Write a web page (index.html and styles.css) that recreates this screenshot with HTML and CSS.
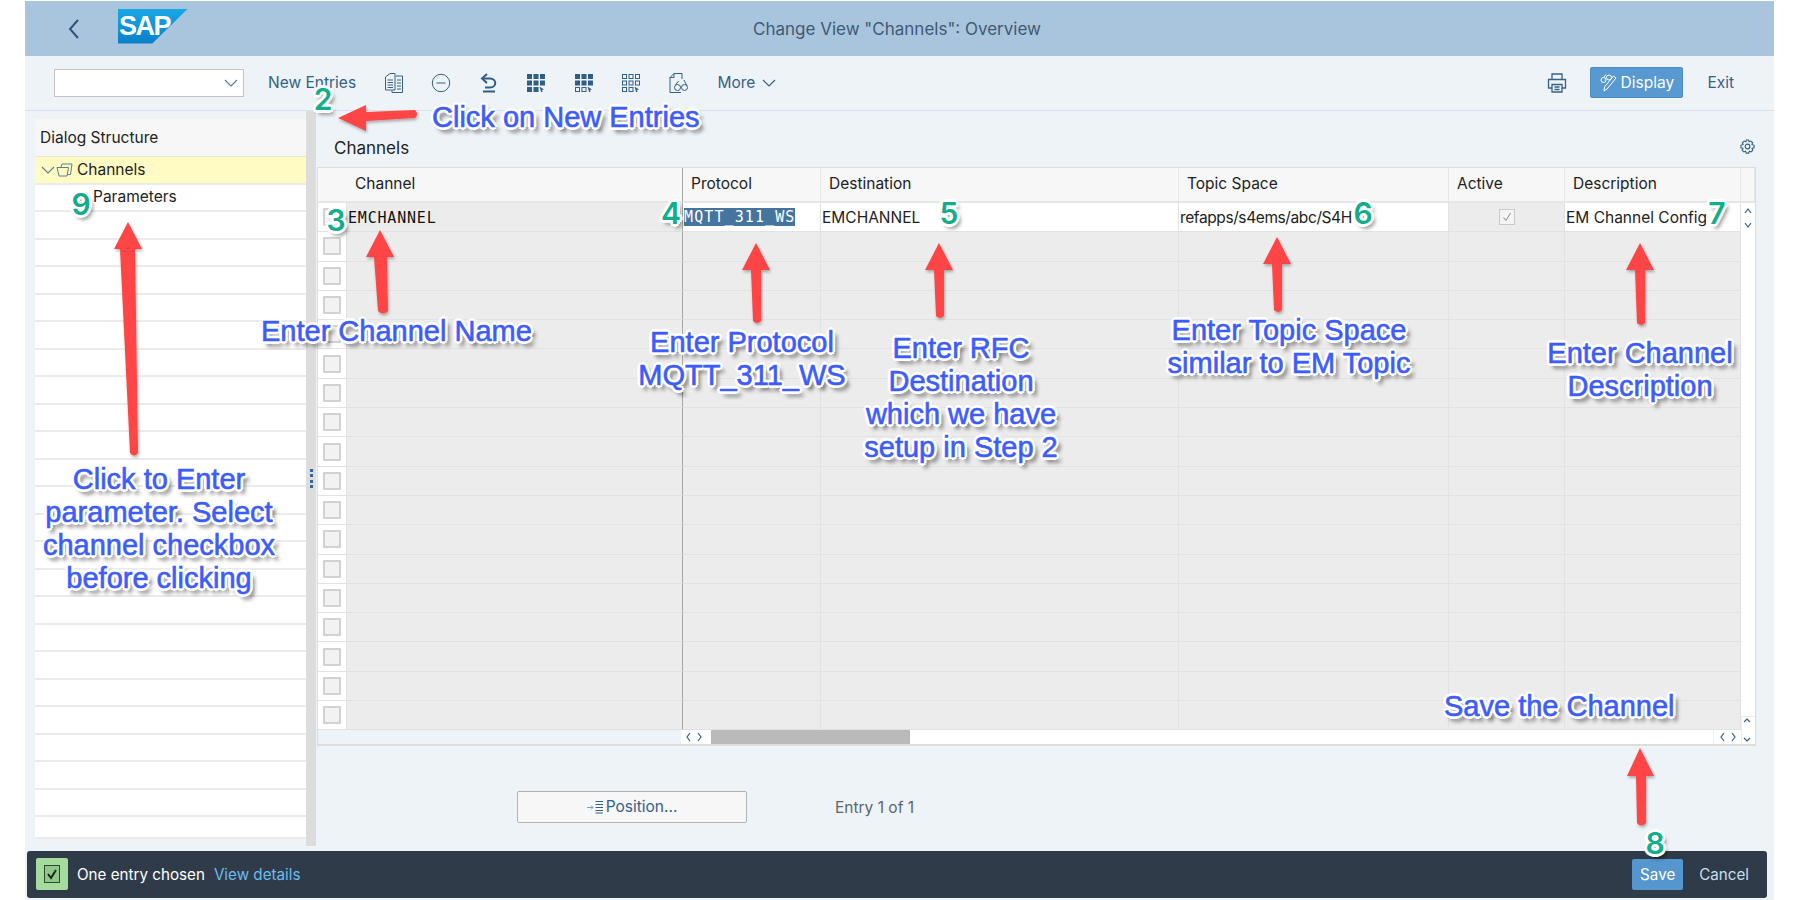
FILE: index.html
```html
<!DOCTYPE html>
<html>
<head>
	<title>Change View "Channels": Overview</title>
	<meta http-equiv="content-type" content="text/html; charset=UTF-8">
	<link rel="stylesheet" href="styles.css">
</head>
<body>
	<svg class="defs" width="0" height="0">
		<defs>
			<symbol id="squares" viewBox="0 0 18 18">
				<rect x="0" y="0" width="5" height="5"/><rect x="6.500" y="0" width="5" height="5"/><rect x="13" y="0" width="5" height="5"/>
				<rect x="0" y="6.500" width="5" height="5"/><rect x="6.500" y="6.500" width="5" height="5"/><rect x="13" y="6.500" width="5" height="5"/>
				<rect x="0" y="13" width="5" height="5"/><rect x="6.500" y="13" width="5" height="5"/>
			</symbol>
			<symbol id="cursor" viewBox="0 0 18 18">
				<path d="M12.500 12.500 L17 15.500 L15 16 L15.500 18 L14 18 L13.500 16 Z" fill="#346187"/>
			</symbol>
			<filter id="drop" x="-20%" y="-20%" width="140%" height="140%"><feDropShadow dx="1" dy="2" stdDeviation="1.500" flood-color="#000" flood-opacity=".3"/></filter>
		</defs>
	</svg>

	<div id="app">
		<header id="shell">
			<svg class="back" width="14" height="22" viewBox="0 0 14 22"><path d="M11 2 L3 11 L11 20" fill="none" stroke="#2f5473" stroke-width="2"/></svg>
			<div class="logo"><span>SAP</span></div>
			<div class="title">Change View "Channels": Overview</div>
		</header>

		<div id="toolbar">
			<div class="combo">
				<svg width="14" height="8" viewBox="0 0 14 8"><path d="M1 1 L7 7 L13 1" fill="none" stroke="#5b7c98" stroke-width="1.200"/></svg>
			</div>
			<span class="tool-text new-entries">New Entries</span>
			<div class="icons">
				<span class="ico"><svg width="20" height="20" viewBox="0 0 20 20" fill="none" stroke="#346187"><path d="M1.500 4 L6 .5 H11 V17 H1.500 Z M3.500 7 H9 M3.500 9.500 H9 M3.500 12 H9 M3.500 14.500 H9"/><path d="M12 3 H18.500 V19.500 H8 V17.500 M13 7 H17 M13 10 H17 M13 13 H17 M13 16 H17"/></svg></span>
				<span class="ico"><svg width="20" height="20" viewBox="0 0 20 20" fill="none" stroke="#346187"><circle cx="10" cy="10" r="8.700"/><path d="M5.500 10 H14.500"/></svg></span>
				<span class="ico"><svg width="18" height="20" viewBox="0 0 18 20" fill="none" stroke="#2f5f85" stroke-width="2"><path d="M7 1 L2 5.500 L7 10"/><path d="M2 5.500 H10 C17 5.500 17 14.500 10 14.500 H5"/><path d="M3 18.500 H15"/></svg></span>
				<span class="ico"><svg width="18" height="18"><use href="#squares" fill="#2f5f85"/><use href="#cursor"/></svg></span>
				<span class="ico"><svg width="18" height="18" viewBox="0 0 18 18" fill="#2f5f85"><rect x="0" y="0" width="5" height="5"/><rect x="6.500" y="0" width="5" height="5"/><rect x="13" y="0" width="5" height="5"/><rect x="0" y="6.500" width="5" height="5"/><rect x="6.500" y="6.500" width="5" height="5"/><rect x="13" y="6.500" width="5" height="5"/><rect x=".5" y="13.500" width="4" height="4" fill="none" stroke="#2f5f85"/><rect x="7" y="13.500" width="4" height="4" fill="none" stroke="#2f5f85"/><use href="#cursor" width="18" height="18"/></svg></span>
				<span class="ico"><svg width="18" height="18" viewBox="0 0 18 18" fill="none" stroke="#346187"><rect x=".5" y=".5" width="4" height="4"/><rect x="7" y=".5" width="4" height="4"/><rect x="13.500" y=".5" width="4" height="4"/><rect x=".5" y="7" width="4" height="4"/><rect x="7" y="7" width="4" height="4"/><rect x="13.500" y="7" width="4" height="4"/><rect x=".5" y="13.500" width="4" height="4"/><rect x="7" y="13.500" width="4" height="4"/><use href="#cursor" width="18" height="18" stroke="none"/></svg></span>
				<span class="ico"><svg width="20" height="20" viewBox="0 0 20 20" fill="none" stroke="#346187"><path d="M13 .5 H5 L1 4.500 V19.500 H12"/><path d="M1 4.500 H5 V.5 M13 .5 V6"/><circle cx="8.500" cy="14.500" r="3"/><circle cx="15.500" cy="14.500" r="3"/><path d="M11.500 14 H12.500 M15 7 L18 13 M9.500 8 L6.500 12"/></svg></span>
			</div>
			<span class="tool-text more">More <svg width="14" height="8" viewBox="0 0 14 8"><path d="M1 1 L7 7 L13 1" fill="none" stroke="#346187" stroke-width="1.200"/></svg></span>
			<div class="spacer"></div>
			<span class="ico print"><svg width="20" height="20" viewBox="0 0 20 20" fill="none" stroke="#346187" stroke-width="1.300"><path d="M5 6 V1 H15 V6 M5 15 H1.500 V6.500 H18.500 V15 H15"/><path d="M5 11.500 H15 V19 H5 Z M7.500 14 H12.500 M7.500 16.500 H12.500"/></svg></span>
			<span class="btn-display"><svg width="18" height="18" viewBox="0 0 18 18" fill="none" stroke="#fff"><circle cx="3.500" cy="6" r="2.500"/><circle cx="9" cy="3.500" r="2.500"/><path d="M3.500 3.500 L6 .5 M16 4 L7 15 L4 17 L4.500 13 L13.500 2 Z"/></svg>Display</span>
			<span class="tool-text exit">Exit</span>
		</div>

		<main id="work">
			<aside id="tree">
				<div class="tree-head">Dialog Structure</div>
				<div class="tree-row selected">
					<svg width="14" height="8" viewBox="0 0 14 8"><path d="M1 1 L7 7 L13 1" fill="none" stroke="#5b7c98" stroke-width="1.100"/></svg>
					<svg class="folder" width="17" height="14" viewBox="0 0 17 14" fill="none" stroke="#5f7f8f"><path d="M1 4.500 H12.500 L11 13 H3 Z"/><path d="M5 4 L6 1 H16 L14.500 11.500 H11.500"/></svg>
					<span>Channels</span>
				</div>
				<div class="tree-row child">Parameters</div>
				<div class="tree-row"></div><div class="tree-row"></div><div class="tree-row"></div><div class="tree-row"></div>
				<div class="tree-row"></div><div class="tree-row"></div><div class="tree-row"></div><div class="tree-row"></div>
				<div class="tree-row"></div><div class="tree-row"></div><div class="tree-row"></div><div class="tree-row"></div>
				<div class="tree-row"></div><div class="tree-row"></div><div class="tree-row"></div><div class="tree-row"></div>
				<div class="tree-row"></div><div class="tree-row"></div><div class="tree-row"></div><div class="tree-row"></div>
				<div class="tree-row"></div><div class="tree-row"></div><div class="tree-row last"></div>
			</aside>

			<div id="splitter"><i></i><i></i><i></i><i></i></div>

			<section id="content">
				<div class="section-title">
					<span>Channels</span>
					<svg width="15" height="15" viewBox="0 0 16 16" fill="none" stroke="#346187" stroke-width="1.200"><circle cx="8" cy="8" r="2.500"/><path d="M6.800 1 H9.200 L9.700 3 L11.500 2.200 L13.500 4 L12.700 5.900 L15 6.700 V9.300 L12.800 10 L13.700 12 L12 13.800 L10 13 L9.300 15 H6.700 L6 13 L4 13.800 L2.300 12 L3.200 10 L1 9.300 V6.700 L3.300 5.900 L2.500 4 L4.500 2.200 L6.300 3 Z"/></svg>
				</div>

				<div id="grid">
					<div class="row head">
						<span class="c sel"></span><span class="c">Channel</span><span class="c">Protocol</span><span class="c">Destination</span><span class="c">Topic Space</span><span class="c">Active</span><span class="c">Description</span><span class="c end"></span>
					</div>
					<div class="row first">
						<span class="c sel"><i class="box"></i></span>
						<span class="c mono">EMCHANNEL</span>
						<span class="c open flush"><span class="picked">MQTT_311_WS</span></span>
						<span class="c open flush">EMCHANNEL</span>
						<span class="c open flush tight">refapps/s4ems/abc/S4H</span>
						<span class="c center"><i class="tick"><svg width="10" height="10" viewBox="0 0 10 10"><path d="M1.500 5.500 L4 8.500 L8.500 1" fill="none" stroke="#8a8a8a"/></svg></i></span>
						<span class="c open flush">EM Channel Config</span>
						<span class="c end arrows"><svg width="10" height="22" viewBox="0 0 10 22" fill="none" stroke="#346187" stroke-width="1.200"><path d="M2 6 L5 2 L8 6 M2 16 L5 20 L8 16"/></svg></span>
					</div>
					<div class="row"><span class="c sel"><i class="box"></i></span><span class="c"></span><span class="c"></span><span class="c"></span><span class="c"></span><span class="c"></span><span class="c"></span><span class="c end"></span></div>
					<div class="row"><span class="c sel"><i class="box"></i></span><span class="c"></span><span class="c"></span><span class="c"></span><span class="c"></span><span class="c"></span><span class="c"></span><span class="c end"></span></div>
					<div class="row"><span class="c sel"><i class="box"></i></span><span class="c"></span><span class="c"></span><span class="c"></span><span class="c"></span><span class="c"></span><span class="c"></span><span class="c end"></span></div>
					<div class="row"><span class="c sel"><i class="box"></i></span><span class="c"></span><span class="c"></span><span class="c"></span><span class="c"></span><span class="c"></span><span class="c"></span><span class="c end"></span></div>
					<div class="row"><span class="c sel"><i class="box"></i></span><span class="c"></span><span class="c"></span><span class="c"></span><span class="c"></span><span class="c"></span><span class="c"></span><span class="c end"></span></div>
					<div class="row"><span class="c sel"><i class="box"></i></span><span class="c"></span><span class="c"></span><span class="c"></span><span class="c"></span><span class="c"></span><span class="c"></span><span class="c end"></span></div>
					<div class="row"><span class="c sel"><i class="box"></i></span><span class="c"></span><span class="c"></span><span class="c"></span><span class="c"></span><span class="c"></span><span class="c"></span><span class="c end"></span></div>
					<div class="row"><span class="c sel"><i class="box"></i></span><span class="c"></span><span class="c"></span><span class="c"></span><span class="c"></span><span class="c"></span><span class="c"></span><span class="c end"></span></div>
					<div class="row"><span class="c sel"><i class="box"></i></span><span class="c"></span><span class="c"></span><span class="c"></span><span class="c"></span><span class="c"></span><span class="c"></span><span class="c end"></span></div>
					<div class="row"><span class="c sel"><i class="box"></i></span><span class="c"></span><span class="c"></span><span class="c"></span><span class="c"></span><span class="c"></span><span class="c"></span><span class="c end"></span></div>
					<div class="row"><span class="c sel"><i class="box"></i></span><span class="c"></span><span class="c"></span><span class="c"></span><span class="c"></span><span class="c"></span><span class="c"></span><span class="c end"></span></div>
					<div class="row"><span class="c sel"><i class="box"></i></span><span class="c"></span><span class="c"></span><span class="c"></span><span class="c"></span><span class="c"></span><span class="c"></span><span class="c end"></span></div>
					<div class="row"><span class="c sel"><i class="box"></i></span><span class="c"></span><span class="c"></span><span class="c"></span><span class="c"></span><span class="c"></span><span class="c"></span><span class="c end"></span></div>
					<div class="row"><span class="c sel"><i class="box"></i></span><span class="c"></span><span class="c"></span><span class="c"></span><span class="c"></span><span class="c"></span><span class="c"></span><span class="c end"></span></div>
					<div class="row"><span class="c sel"><i class="box"></i></span><span class="c"></span><span class="c"></span><span class="c"></span><span class="c"></span><span class="c"></span><span class="c"></span><span class="c end"></span></div>
					<div class="row"><span class="c sel"><i class="box"></i></span><span class="c"></span><span class="c"></span><span class="c"></span><span class="c"></span><span class="c"></span><span class="c"></span><span class="c end"></span></div>
					<div class="row"><span class="c sel"><i class="box"></i></span><span class="c"></span><span class="c"></span><span class="c"></span><span class="c"></span><span class="c"></span><span class="c"></span><span class="c end"></span></div>
					<div class="hbar">
						<div class="hfix"></div>
						<div class="step first-step"><svg width="18" height="10" viewBox="0 0 18 10" fill="none" stroke="#346187" stroke-width="1.200"><path d="M5 1 L2 5 L5 9 M13 1 L16 5 L13 9"/></svg></div>
						<div class="thumb"></div>
						<div class="track"></div>
						<div class="step right"><svg width="18" height="10" viewBox="0 0 18 10" fill="none" stroke="#346187" stroke-width="1.200"><path d="M5 1 L2 5 L5 9 M13 1 L16 5 L13 9"/></svg></div>
						<div class="vstep"><svg width="10" height="26" viewBox="0 0 10 26" fill="none" stroke="#346187" stroke-width="1.200"><path d="M2 5 L5 2 L8 5 M2 21 L5 24 L8 21"/></svg></div>
					</div>
				</div>

				<div class="pager">
					<span class="btn-position"><svg width="17" height="14" viewBox="0 0 17 14" fill="none" stroke="#346187"><path d="M0 7.500 H6 M4 5.500 L6 7.500 L4 9.500" stroke="#7f9db5"/><path d="M8.500 1.500 H16 M8.500 4.500 H16 M8.500 7.500 H16 M8.500 10.500 H16 M8.500 13 H16"/></svg>Position...</span>
					<span class="entry">Entry 1 of 1</span>
				</div>
			</section>
		</main>

		<footer id="status">
			<span class="ok"><i><svg width="12" height="14" viewBox="0 0 12 14"><path d="M2 7 L5 11 L10 3" fill="none" stroke="#14281a" stroke-width="2"/></svg></i></span>
			<span class="msg">One entry chosen</span>
			<span class="link">View details</span>
			<div class="spacer"></div>
			<span class="btn-save">Save</span>
			<span class="cancel">Cancel</span>
		</footer>
	</div>

	<!-- arrows and labels drawn on top of the screenshot -->
	<svg id="arrows" width="1798" height="900" viewBox="0 0 1798 900">
		<g fill="#ff4444" stroke="none" filter="url(#drop)">
			<path d="M338 118 L366 105 L366 112 L415 110 Q419 114 415 118 L366 121 L366 131 Z"/>
			<path d="M380 230 L394 257 L387 257 L388 311 Q383 316 378 311 L374 257 L366 257 Z"/>
			<path d="M128 222 L142 249 L135 249 L138 453 Q134 458 130 453 L120 249 L114 249 Z"/>
			<path d="M756 243 L770 270 L761 270 L761 321 Q757 325 753 321 L751 270 L742 270 Z"/>
			<path d="M939 243 L953 270 L944 270 L944 316 Q940 320 936 316 L934 270 L925 270 Z"/>
			<path d="M1277 237 L1291 264 L1282 264 L1282 310 Q1278 314 1274 310 L1272 264 L1263 264 Z"/>
			<path d="M1640 243 L1654 270 L1645 270 L1645 323 Q1641 327 1637 323 L1635 270 L1626 270 Z"/>
			<path d="M1640 748 L1654 776 L1646 776 L1646 823 Q1641 828 1637 823 L1636 776 L1627 776 Z"/>
		</g>
	</svg>

	<div class="note n-new">Click on New Entries</div>
	<div class="note n-name">Enter Channel Name</div>
	<div class="note n-protocol">Enter Protocol<br>MQTT_311_WS</div>
	<div class="note n-rfc">Enter RFC<br>Destination<br>which we have<br>setup in Step 2</div>
	<div class="note n-topic">Enter Topic Space<br>similar to EM Topic</div>
	<div class="note n-desc">Enter Channel<br>Description</div>
	<div class="note n-param">Click to Enter<br>parameter. Select<br>channel checkbox<br>before clicking</div>
	<div class="note n-save">Save the Channel</div>

	<span class="num s2">2</span>
	<span class="num s3">3</span>
	<span class="num s4">4</span>
	<span class="num s5">5</span>
	<span class="num s6">6</span>
	<span class="num s7">7</span>
	<span class="num s8">8</span>
	<span class="num s9">9</span>
</body>
</html>
```

FILE: styles.css
```css
*{
	box-sizing: border-box;
}

html, body{
	margin: 0;
	padding: 0;
	height: 900px;
	overflow: hidden;
	background: #fff;
}

body{
	font-family: 'Inter', 'Liberation Sans', sans-serif;
	font-size: 15.5px;
	color: #222;
	position: relative;
}

.defs{
	position: absolute;
}

#app{
	margin: 1px 0 0 25px;
	width: 1749px;
	height: 899px;
	background: #eef3f8;
	display: flex;
	flex-direction: column;
}

/* shell bar */

#shell{
	height: 55px;
	background: #a9c5de;
	display: flex;
	align-items: center;
	position: relative;
	flex: none;
}

#shell .back{
	margin-left: 42px;
}

.logo{
	width: 70px;
	height: 35px;
	margin: -5px 0 0 37px;
	background: linear-gradient(#19a8e6, #0a7fc9);
	clip-path: polygon(0 0, 100% 0, 49% 100%, 0 100%);
	color: #fff;
	font-family: 'Liberation Sans', sans-serif;
	font-weight: bold;
	font-size: 27px;
	line-height: 35px;
	letter-spacing: -1.500px;
	padding-left: 1px;
}

.title{
	position: absolute;
	left: 0;
	right: 5px;
	text-align: center;
	font-size: 17px;
	color: #3f5a73;
}

/* toolbar */

#toolbar{
	height: 55px;
	border-bottom: 1px solid #d7e2ec;
	display: flex;
	align-items: center;
	flex: none;
	color: #346187;
	padding-bottom: 1px;
}

.combo{
	width: 190px;
	height: 28px;
	margin-left: 29px;
	background: #fff;
	border: 1px solid #c4c4c4;
	display: flex;
	align-items: center;
	justify-content: flex-end;
	padding-right: 5px;
}

.tool-text{
	color: #346187;
}

.new-entries{
	margin-left: 24px;
	width: 102px;
}

.icons{
	display: flex;
}

.ico{
	width: 47.5px;
	height: 24px;
	display: flex;
	align-items: center;
	justify-content: center;
}

.more{
	margin-left: 15px;
	display: flex;
	align-items: center;
	gap: 7px;
}

.spacer{
	flex: 1;
}

.print{
	width: 40px;
	margin-right: 13px;
}

.btn-display{
	width: 93px;
	height: 31px;
	background: #5899d1;
	border: 1px solid #4c8cc4;
	border-radius: 2px;
	color: #fff;
	display: flex;
	align-items: center;
	justify-content: center;
	gap: 3px;
}

.exit{
	margin: 0 40px 0 24px;
}

/* work area */

#work{
	flex: 1;
	display: flex;
	min-height: 0;
}

#tree{
	width: 271px;
	margin: 8px 0 0 10px;
	flex: none;
}

.tree-head{
	height: 38px;
	line-height: 38px;
	padding-left: 5px;
	background: #f7f7f7;
	border-bottom: 1px solid #e5e5e5;
}

.tree-row{
	height: 27.5px;
	background: #fff;
	border-bottom: 2px solid #ebebeb;
	line-height: 25px;
	display: flex;
	align-items: center;
	gap: 2px;
	padding-left: 6px;
}

.tree-row.selected{
	background: #fffbc2;
	gap: 1px;
}

.tree-row.selected span{
	margin-left: 3px;
}

.tree-row.child{
	padding-left: 58px;
	padding-bottom: 1px;
}

.tree-row.last{
	height: 21.5px;
}

#splitter{
	width: 10px;
	margin: 0 1px 5px 0;
	flex: none;
	background: #dcdcdc;
	display: flex;
	flex-direction: column;
	align-items: center;
	justify-content: center;
	gap: 2.500px;
}

#splitter i{
	width: 3px;
	height: 3px;
	background: #2f6796;
}

#content{
	width: 1439px;
	flex: none;
}

.section-title{
	height: 56px;
	padding: 25px 0 0 17px;
	font-size: 17px;
	line-height: 24px;
	position: relative;
}

.section-title svg{
	position: absolute;
	right: 1px;
	top: 28px;
}

/* table */

#grid{
	border: 1px solid #dcdcdc;
	border-width: 1px 1px 2px 1px;
	background: #fff;
}

.row{
	display: grid;
	grid-template-columns: 29px 336px 138px 358px 270px 116px 176px 14px;
	height: 29.3px;
}

.row.head{
	height: 35px;
	background: #f7f7f7;
}

.row.first .c{
	height: 29px;
}

.c{
	background: #ececec;
	border-right: 1px solid #e2e2e2;
	border-bottom: 1px solid #e2e2e2;
	padding-left: 8px;
	display: flex;
	align-items: center;
	white-space: nowrap;
	overflow: hidden;
}

.row.head .c{
	background: #f7f7f7;
	border-bottom: 2px solid #e6e6e6;
	border-right: 1px solid #e6e6e6;
	padding-bottom: 2px;
}

.row .c:nth-child(2),
.row.head .c:nth-child(2){
	border-right: 1px solid #a8a8a8;
}

.c.sel{
	background: #fff;
	padding: 0 0 0 5px;
}

.row.head .c.sel{
	background: #f7f7f7;
	border-right: none;
}

.c.end{
	background: #fff;
	border: none;
	padding: 0;
}

.row.head .c.end{
	background: #f7f7f7;
}

.c.open{
	background: #fff;
}

.c.flush{
	padding-left: 1px;
}

.c.tight{
	letter-spacing: -.4px;
}

.c.mono{
	font-family: 'DejaVu Sans Mono', 'Liberation Mono', monospace;
	font-size: 15px;
	letter-spacing: .8px;
	color: #111;
	padding: 1px 0 0 1px;
}

.c.center{
	justify-content: center;
	padding: 0;
}

.picked{
	display: inline-block;
	height: 18px;
	font-family: 'DejaVu Sans Mono', 'Liberation Mono', monospace;
	font-size: 15px;
	letter-spacing: 1.100px;
	line-height: 18px;
	background: #45759f;
	color: #fff;
}

.box{
	width: 18px;
	height: 18px;
	background: #f2f2f2;
	border: 2px solid #d2d2d2;
	border-radius: 1px;
}

.tick{
	width: 16px;
	height: 16px;
	background: #f4f4f4;
	border: 1px solid #c9c9c9;
	display: flex;
	align-items: center;
	justify-content: center;
}

.arrows{
	align-items: center;
	justify-content: center;
}

.hbar{
	height: 14px;
	display: flex;
	background: #fff;
}

.hfix{
	width: 363px;
	background: #eef3f8;
}

.step{
	width: 28px;
	display: flex;
	align-items: center;
	justify-content: center;
	background: #fff;
}

.first-step{
	width: 30px;
	justify-content: flex-start;
	padding-left: 4px;
}

.thumb{
	width: 199px;
	background: #bababa;
}

.track{
	width: 804px;
	background: #fff;
}

.step.right{
	border-left: 1px solid #eee;
}

.vstep{
	margin-top: -14px;
	width: 14px;
	height: 28px;
	margin-left: auto;
	background: #fff;
	border-left: 1px solid #eee;
	border-top: 1px solid #eee;
	position: relative;
}

/* position button row */

.pager{
	padding: 45px 0 0 200px;
	display: flex;
	align-items: center;
}

.btn-position{
	width: 230px;
	height: 32px;
	padding-bottom: 1px;
	background: #f7f7f7;
	border: 1px solid #b3b3b3;
	border-radius: 2px;
	color: #346187;
	display: flex;
	align-items: center;
	justify-content: center;
	gap: 2px;
}

.entry{
	margin-left: 88px;
	color: #5a6670;
}

/* status bar */

#status{
	height: 47px;
	width: 1740px;
	margin: 0 0 2px 2px;
	background: #2f3b48;
	border-radius: 3px;
	flex: none;
	display: flex;
	align-items: center;
	color: #fff;
	font-size: 15.2px;
	padding-bottom: 1px;
}

.ok{
	width: 32px;
	height: 32px;
	margin-left: 9px;
	background: #a5dc9e;
	border-radius: 2px;
	display: flex;
	align-items: center;
	justify-content: center;
}

.ok i{
	width: 16px;
	height: 18px;
	background: #8fc98a;
	border: 1px solid #2c4a30;
	display: flex;
	align-items: center;
	justify-content: center;
}

.msg{
	margin-left: 9px;
}

.link{
	margin-left: 9px;
	color: #6cbcf0;
}

.btn-save{
	width: 51px;
	height: 31px;
	background: #5496cd;
	border-radius: 2px;
	text-align: center;
	line-height: 31px;
	color: #fff;
}

.cancel{
	margin: 0 18px 0 16px;
	color: #c8dff0;
}

/* annotations */

#arrows{
	position: absolute;
	left: 0;
	top: 0;
}

.note{
	position: absolute;
	font-family: 'Liberation Sans', sans-serif;
	font-size: 29px;
	line-height: 33px;
	color: #3d5cff;
	-webkit-text-stroke: .6px #3d5cff;
	text-align: center;
	white-space: nowrap;
	text-shadow: -3px 0 #fff, 3px 0 #fff, 0 -3px #fff, 0 3px #fff, -2px -2px #fff, 2px -2px #fff, -2px 2px #fff, 2px 2px #fff, 4px 5px 4px rgba(0,0,0,.7);
}

.n-new{ left: 432px; top: 101px; }
.n-name{ left: 261px; top: 315px; }
.n-protocol{ left: 592px; width: 300px; top: 326px; }
.n-rfc{ left: 811px; width: 300px; top: 332px; }
.n-topic{ left: 1139px; width: 300px; top: 314px; }
.n-desc{ left: 1490px; width: 300px; top: 337px; }
.n-param{ left: 9px; width: 300px; top: 463px; }
.n-save{ left: 1444px; top: 690px; }

.num{
	position: absolute;
	width: 30px;
	margin-left: -15px;
	text-align: center;
	font-family: 'Inter', sans-serif;
	font-weight: 600;
	font-size: 30px;
	line-height: 34px;
	color: #12ad8b;
	text-shadow: -3px 0 #fff, 3px 0 #fff, 0 -3px #fff, 0 3px #fff, -2px -2px #fff, 2px -2px #fff, -2px 2px #fff, 2px 2px #fff, 3px 4px 4px rgba(0,0,0,.55);
}

.s2{ left: 323px; top: 82px; }
.s3{ left: 336px; top: 203px; }
.s4{ left: 671px; top: 196px; }
.s5{ left: 949px; top: 196px; }
.s6{ left: 1363px; top: 196px; }
.s7{ left: 1717px; top: 196px; }
.s8{ left: 1655px; top: 826px; }
.s9{ left: 81px; top: 187px; }
```
